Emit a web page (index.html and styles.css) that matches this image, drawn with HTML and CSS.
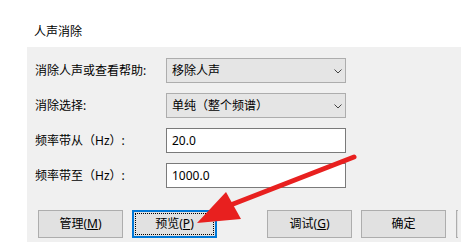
FILE: index.html
```html
<!DOCTYPE html>
<html lang="zh-CN">
<head>
  <meta charset="UTF-8" />
  <title>人声消除</title>
  <link rel="stylesheet" href="styles.css">
</head>
<body>
  <div class="title">人声消除</div>

  <div class="panel">
    <div class="row">
      <label>消除人声或查看帮助:</label>
      <div class="select">移除人声
        <svg class="chev" width="8" height="5" viewBox="0 0 8 5"><path d="M0.5 0.5 L4 4 L7.5 0.5" fill="none" stroke="#444" stroke-width="1"/></svg>
      </div>
    </div>
    <div class="row">
      <label>消除选择:</label>
      <div class="select">单纯（整个频谱）
        <svg class="chev" width="8" height="5" viewBox="0 0 8 5"><path d="M0.5 0.5 L4 4 L7.5 0.5" fill="none" stroke="#444" stroke-width="1"/></svg>
      </div>
    </div>
    <div class="row">
      <label>频率带从（Hz）:</label>
      <div class="field">20.0</div>
    </div>
    <div class="row">
      <label>频率带至（Hz）:</label>
      <div class="field">1000.0</div>
    </div>

    <div class="buttons">
      <button class="btn">管理(<u>M</u>)</button>
      <button class="btn focus"><span>预览(<u>P</u>)</span></button>
      <button class="btn far">调试(<u>G</u>)</button>
      <button class="btn">确定</button>
      <button class="btn edge"></button>
    </div>
  </div>

  <!-- 红色箭头 -->
  <svg class="arrow" width="461" height="250" viewBox="0 0 461 250">
    <line x1="354" y1="157" x2="228" y2="206" stroke="#e8201f" stroke-width="5" stroke-linecap="round"/>
    <polygon points="197,223 226,192 241,219" fill="#e8201f"/>
  </svg>
</body>
</html>
```

FILE: styles.css
```css
* {
  margin: 0;
  padding: 0;
  box-sizing: border-box;
}

body {
  background: #ffffff;
  color: #000;
  font-family: "Noto Sans", "Noto Sans CJK SC", sans-serif;
  font-size: 12px;
  line-height: 16px;
  width: 461px;
  height: 250px;
  overflow: hidden;
  position: relative;
}

.title {
  height: 47px;
  padding: 24px 0 0 34px;
}

.panel {
  margin-left: 27px;
  height: 195px;
  background: #f0f0f0;
  padding: 11px 0 0 8px;
  display: flex;
  flex-direction: column;
  gap: 10px;
}

.row {
  display: grid;
  grid-template-columns: 131px 180px;
  align-items: center;
  height: 25px;
}

.select,
.field {
  height: 25px;
  padding: 4px 5px;
  position: relative;
}

.select {
  background: #e5e5e5;
  border: 1px solid #adadad;
}

.field {
  background: #fff;
  border: 1px solid #7a7a7a;
}

.chev {
  position: absolute;
  right: 3px;
  top: 10px;
}

.buttons {
  display: flex;
  gap: 9px;
  margin: 12px 0 0 3px;
}

.btn {
  width: 85px;
  height: 28px;
  flex: none;
  background: #e1e1e1;
  border: 1px solid #adadad;
  font: inherit;
  color: #000;
}

.btn u {
  text-decoration: underline;
}

.btn.focus {
  border: 2px solid #0078d7;
  padding: 1px;
}

.btn.focus span {
  display: flex;
  height: 100%;
  align-items: center;
  justify-content: center;
  border: 1px dotted #000;
}

.btn.far {
  margin-left: 41px;
}

.btn.edge {
  width: 2px;
  margin-left: 1px;
  border-right: none;
}

.arrow {
  position: absolute;
  left: 0;
  top: 0;
}
```
